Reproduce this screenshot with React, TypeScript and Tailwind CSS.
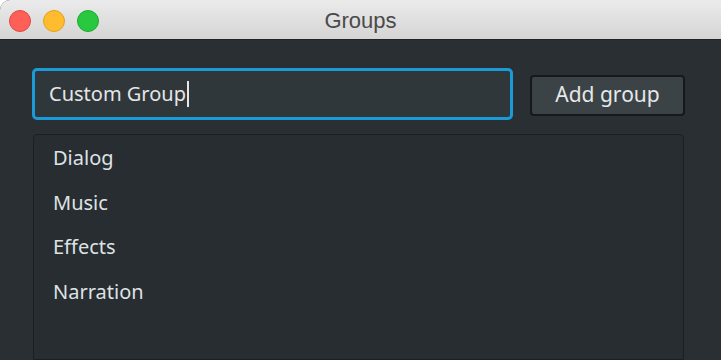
import React from 'react';

const items = ['Dialog', 'Music', 'Effects', 'Narration'];

const App: React.FC = () => {
  return (
    <div className="w-[721px] h-[360px] overflow-hidden bg-[#292f33] flex flex-col rounded-tl-[10px]">
      {/* title bar */}
      <div className="relative h-[40px] shrink-0 flex items-center justify-center bg-gradient-to-b from-[#ebebeb] to-[#d5d5d5] border-b border-[#1e2326]">
        <div className="absolute left-[9px] top-[10px] flex gap-[12px]">
          <span className="w-[22px] h-[22px] rounded-full bg-[#fe5f57] border border-[#e2463f]" />
          <span className="w-[22px] h-[22px] rounded-full bg-[#febc2e] border border-[#e1a116]" />
          <span className="w-[22px] h-[22px] rounded-full bg-[#28c840] border border-[#1aab29]" />
        </div>
        <span className="text-[22px] text-[#4a4a4a] pt-[2px] font-['Liberation_Sans',sans-serif]">Groups</span>
      </div>

      {/* content */}
      <div className="flex-1 flex flex-col px-[32px] pt-[28px] font-['Noto_Sans',sans-serif]">
        <div className="flex items-start gap-[17px]">
          <div className="w-[481px] h-[52px] rounded-[5px] border-[3px] border-[#1b9ad8] bg-[#30373b] flex items-center pl-[14px]">
            <span className="text-[20px] text-[#e4e6e7] leading-none">Custom Group</span>
            <span className="w-[2px] h-[26px] bg-[#e4e6e7] ml-[1px]" />
          </div>
          <button className="mt-[7px] w-[155px] h-[41px] rounded-[4px] border-2 border-[#15191b] bg-[#3b4347] text-[21px] text-[#e6e8e9] flex items-center justify-center pb-[2px]">
            Add group
          </button>
        </div>

        <div className="mt-[14px] ml-[1px] w-[651px] flex-1 rounded-t-[4px] border border-[#1b1f22] bg-[#272d31] pt-[9px] pl-[19px] flex flex-col">
          {items.map((it) => (
            <div key={it} className="h-[44.5px] flex items-start text-[20px] text-[#dfe2e4] leading-[28px]">
              {it}
            </div>
          ))}
        </div>
      </div>
    </div>
  );
};

export default App;
